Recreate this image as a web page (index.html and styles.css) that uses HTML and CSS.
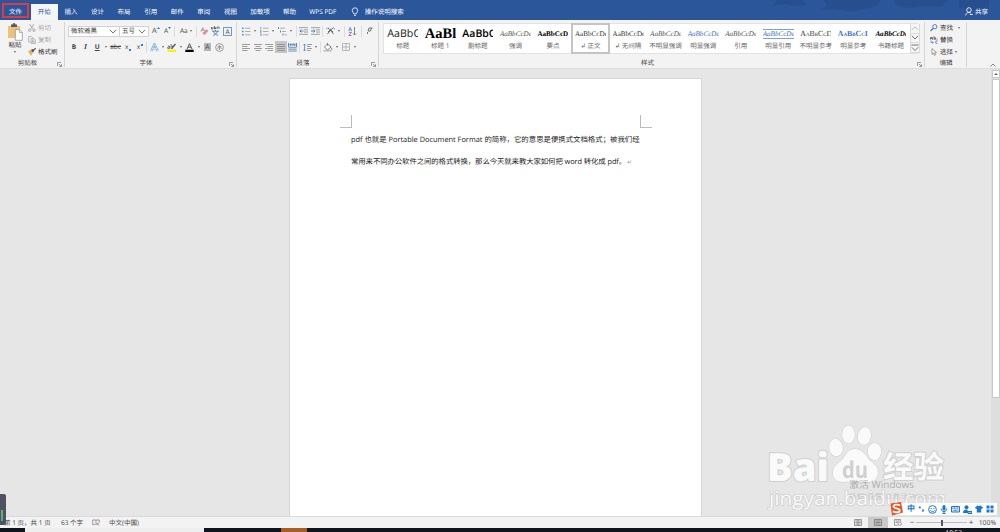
FILE: index.html
```
<!DOCTYPE html>
<html lang="zh-CN">

<head>
  <meta charset="UTF-8">
  <meta name="viewport" content="width=device-width, initial-scale=1.0">
  <title>Word</title>
  <link rel="stylesheet" href="styles.css">
</head>

<body>

  <header class="titlebar">
    <nav class="tabs">
      <span class="tab tab-file">文件</span>
      <span class="tab active">开始</span>
      <span class="tab">插入</span>
      <span class="tab">设计</span>
      <span class="tab">布局</span>
      <span class="tab">引用</span>
      <span class="tab">邮件</span>
      <span class="tab">审阅</span>
      <span class="tab">视图</span>
      <span class="tab tab-addin">加载项</span>
      <span class="tab">帮助</span>
      <span class="tab tab-wps">WPS PDF</span>
    </nav>
    <span class="search">
      <svg width="8" height="10" viewBox="0 0 8 10" fill="none" stroke="#fff" stroke-width=".8"><path d="M2.7 6.8C2.5 5.6 1.3 5 1.3 3.5a2.7 2.7 0 0 1 5.4 0C6.700 5 5.500 5.600 5.300 6.800zM2.900 8.300h2.200"/></svg>
      操作说明搜索
    </span>
    <svg class="clouds" width="220" height="20" viewBox="0 0 220 20" fill="#274f8d"><path d="M8 0h26l4 5-14 1-7-2-14 2zM55 0h57l-5 7-13 2-9 3-20-3-15 1 8-4zM125 0h55l-8 7-18-1-16 2-11-3zM190 0h30v7l-16 3-14-3z"/></svg>
    <span class="share">
      <svg width="8" height="9" viewBox="0 0 8 9" fill="none" stroke="#fff" stroke-width=".8"><circle cx="4" cy="3" r="2.300"/><path d="M.7 8.500c.2-2 1.400-3 3.300-3 1 0 1.700.3 2.200.8M4.800 7.500h3"/></svg>
      共享
    </span>
  </header>

  <section class="ribbon">
    <div class="group g-clip">
      <div class="group-body">
        <div class="paste">
          <svg width="16" height="18" viewBox="0 0 16 18"><path d="M1 3h12v12H1z" fill="#edc27a"/><path d="M4 1.500h1.500a1.500 1.500 0 0 1 3 0H10V4H4z" fill="#5b5b5b"/><path d="M8.300 6.500h4l3 3v7.800h-7z" fill="#fff" stroke="#888" stroke-width=".7"/><path d="M12.300 6.500v3h3" fill="none" stroke="#888" stroke-width=".6"/></svg>
          <span>粘贴</span>
          <i class="caret"></i>
        </div>
        <div class="clip-list">
          <span class="dim"><svg width="8" height="8" viewBox="0 0 8 8" fill="none" stroke="#aaa"><path d="M1.500 0l4 5.500M6 0L2.300 5.500"/><circle cx="1.700" cy="6.300" r="1.200"/><circle cx="6" cy="6.300" r="1.200"/></svg>剪切</span>
          <span class="dim"><svg width="8" height="8" viewBox="0 0 8 8" fill="#eee" stroke="#b5aeb8" stroke-width=".8"><path d="M.5.5h3l1.500 1.500v4H.5zM3 2.500h3L7.500 4v3.500H3zM4 5h2.500M4 6.200h2.500"/></svg>复制</span>
          <span><svg width="8" height="8" viewBox="0 0 8 8"><path d="M0 3l3-1 2 2.500L3 8z" fill="#e8b057"/><path d="M3 2l1.300-1L6 3 5 4.500z" fill="#444"/><path d="M5 2.500L7.700.3" stroke="#444" stroke-width="1.200"/></svg>格式刷</span>
        </div>
      </div>
      <div class="group-title">剪贴板</div>
      <svg class="launcher" viewBox="0 0 5 5"><path d="M.5 4V.5H4M2 2l2.500 2.500M4.500 2.200v2.300H2.200"/></svg>
    </div>

    <div class="group g-font">
      <div class="tool-row">
        <span class="combo combo-face">微软雅黑<svg width="8" height="5" viewBox="0 0 8 5"><path d="M.8.8L4 4 7.200.8"/></svg></span>
        <span class="combo combo-size">五号<svg width="8" height="5" viewBox="0 0 8 5"><path d="M.8.8L4 4 7.200.8"/></svg></span>
        <span class="tool big-a">A<svg class="tip" width="3" height="2" viewBox="0 0 3 2"><path d="M0 2L1.500 0 3 2z"/></svg></span>
        <span class="tool small-a">A<svg class="tip" width="3" height="2" viewBox="0 0 3 2"><path d="M0 0h3L1.500 2z"/></svg></span>
        <i class="sep"></i>
        <span class="tool w19">Aa <i class="caret"></i></span>
        <i class="sep"></i>
        <span class="tool"><svg width="9" height="9" viewBox="0 0 9 9"><path d="M1 4.500L2.700.7 4.500 4M1.600 3.200h2" fill="none" stroke="#777" stroke-width=".7"/><path d="M2.300 6.300l4-4 2.200 1.500-3.800 4.200z" fill="#e08a9b"/></svg></span>
        <span class="tool"><svg width="9" height="10" viewBox="0 0 9 10" fill="none" stroke-width=".8"><path d="M.5 1v2M2 1v2H.5M3.500 0v3h1V1.500h-1M6 3V1h2v2" stroke="#555"/><path d="M1 5.200h7M4.500 4v1M6.500 5.200C6 7.500 4 9 2 9.300M2.500 5.200C3 7.500 5 9 7 9.300" stroke="#2f73b7"/></svg></span>
        <span class="tool"><span class="boxed">A</span></span>
      </div>
      <div class="tool-row row-two">
        <span class="tool"><b>B</b></span>
        <span class="tool it">I</span>
        <span class="tool"><u><b>U</b></u></span>
        <span class="tool w6"><i class="caret"></i></span>
        <span class="tool w12 strike">abc</span>
        <span class="tool script">x<i class="low"></i></span>
        <span class="tool script">x<i class="high"></i></span>
        <i class="sep"></i>
        <span class="tool"><svg width="9" height="9" viewBox="0 0 9 9" fill="none"><path d="M1.200 8L4.400 1.200 7.800 8M2.700 5.500h3.500" stroke="#7fadd9" stroke-width="2.200"/><path d="M1.200 8L4.400 1.200 7.800 8M2.700 5.500h3.500" stroke="#fff" stroke-width=".6"/></svg></span>
        <span class="tool w6"><i class="caret"></i></span>
        <span class="tool"><svg width="10" height="9" viewBox="0 0 10 9"><path d="M1 3h1.500v2.500H.8V4h1.500M4 1v4.500h1.500V3H4" fill="none" stroke="#555" stroke-width=".7"/><path d="M5 5l3.500-4" stroke="#555" stroke-width="1.300"/><path d="M.5 6.700h8.500V9H.5z" fill="#ffef00"/></svg></span>
        <span class="tool w6"><i class="caret"></i></span>
        <span class="tool"><svg width="9" height="9" viewBox="0 0 9 9"><path d="M2 6L4.500.7 7 6M3 4.200h3" fill="none" stroke="#444" stroke-width=".9"/><path d="M.3 6.700h8.400V9H.3z" fill="#000"/></svg></span>
        <span class="tool w6"><i class="caret"></i></span>
        <span class="tool"><span class="shaded">A</span></span>
        <span class="tool"><svg width="9" height="9" viewBox="0 0 9 9" fill="none" stroke="#777" stroke-width=".7"><circle cx="4.500" cy="4.500" r="3.900"/><path d="M2.500 3.700h4M4.500 2v5M3.500 4.300L2.500 6M5.500 4.300L6.500 6"/></svg></span>
      </div>
      <div class="group-title">字体</div>
      <svg class="launcher" viewBox="0 0 5 5"><path d="M.5 4V.5H4M2 2l2.500 2.500M4.500 2.200v2.300H2.200"/></svg>
    </div>

    <div class="group g-para">
      <div class="tool-row">
        <span class="tool w10"><svg width="9" height="9" viewBox="0 0 9 9"><path d="M0 1.200h1.500M0 4.500h1.500M0 7.800h1.500" stroke="#4b87c1" stroke-width="1.400"/><path d="M3 1.200h5.500M3 4.500h5.500M3 7.800h5.500" stroke="#999" stroke-width=".8"/></svg></span>
        <span class="tool w8"><i class="caret"></i></span>
        <span class="tool w10"><svg width="9" height="9" viewBox="0 0 9 9"><path d="M.8 0v2.300M.2 3.500h1v1h-.8v1h1M.2 6.800h1v2H.2" fill="none" stroke="#4b87c1" stroke-width=".7"/><path d="M3 1.200h5.500M3 4.500h5.500M3 7.800h5.500" stroke="#999" stroke-width=".8"/></svg></span>
        <span class="tool w8"><i class="caret"></i></span>
        <span class="tool w10"><svg width="9" height="9" viewBox="0 0 9 9"><path d="M.5 0v2M2.500 3.500v2M5 6.500v2" stroke="#4b87c1"/><path d="M2 1.200h5M4 4.500h4M6.500 7.800H9" stroke="#999" stroke-width=".8"/></svg></span>
        <span class="tool w8"><i class="caret"></i></span>
        <i class="sep"></i>
        <span class="tool"><svg width="9" height="8" viewBox="0 0 9 8"><path d="M0 .7h9M5 2.900h4M5 5h4M0 7.300h9" stroke="#888" stroke-width=".8"/><path d="M4.500 4H1M2.300 2.500L.8 4l1.500 1.500" fill="none" stroke="#2f73b7" stroke-width=".9"/></svg></span>
        <span class="tool"><svg width="9" height="8" viewBox="0 0 9 8"><path d="M0 .7h9M5 2.900h4M5 5h4M0 7.300h9" stroke="#888" stroke-width=".8"/><path d="M0 4h3.500M2.500 2.500L4 4 2.500 5.500" fill="none" stroke="#2f73b7" stroke-width=".9"/></svg></span>
        <i class="sep"></i>
        <span class="tool"><svg width="9" height="8" viewBox="0 0 9 8" fill="none" stroke="#555" stroke-width=".9"><path d="M1.500 7L4.500 3 7.500 7M2 1l5 4M7 1L2 5"/><path d="M0 2.300L1.800.5M9 2.300L7.200.5" stroke="#4b87c1"/></svg></span>
        <span class="tool w6"><i class="caret"></i></span>
        <i class="sep sep-wide"></i>
        <span class="tool"><svg width="9" height="9" viewBox="0 0 9 9" fill="none" stroke-width=".8"><path d="M.7 4L2.200.3 3.700 4M1.200 2.800h2" stroke="#4b87c1"/><path d="M.8 5.300h2.700L.8 8.500h2.700" stroke="#8f57ab"/><path d="M6.500 0v8M5 6.500L6.500 8 8 6.500" stroke="#666"/></svg></span>
        <i class="sep sep-wide"></i>
        <span class="tool"><svg width="7" height="8" viewBox="0 0 7 8"><path d="M5.500 1L4.500 4H2l1-3h3.500M1.500 5v2" fill="none" stroke="#666" stroke-width=".9"/></svg></span>
      </div>
      <div class="tool-row row-two">
        <span class="tool"><svg width="8" height="7" viewBox="0 0 8 7" stroke="#888" stroke-width=".8"><path d="M0 .5h8M0 2.500h5.500M0 4.500h8M0 6.500h5.500"/></svg></span>
        <span class="tool"><svg width="8" height="7" viewBox="0 0 8 7" stroke="#888" stroke-width=".8"><path d="M0 .5h8M1.500 2.500h5M0 4.500h8M1.500 6.500h5"/></svg></span>
        <span class="tool"><svg width="8" height="7" viewBox="0 0 8 7" stroke="#888" stroke-width=".8"><path d="M0 .5h8M2.500 2.500H8M0 4.500h8M2.500 6.500H8"/></svg></span>
        <span class="tool pressed"><svg width="8" height="7" viewBox="0 0 8 7" stroke="#888" stroke-width=".8"><path d="M0 .5h8M0 2.500h8M0 4.500h8M0 6.500h8"/></svg></span>
        <span class="tool"><svg width="9" height="9" viewBox="0 0 9 9"><path d="M0 0h9v9H0z" fill="#c9dcee"/><path d="M.5 0v4M8.500 0v4M2 1.700h5M3 .7l-1 1 1 1M6 .7l1 1-1 1" fill="none" stroke="#3978b3" stroke-width=".8"/><path d="M.5 4.500h8M.5 6.200h8M.5 8h8" stroke="#8a949e" stroke-width=".8"/></svg></span>
        <i class="sep"></i>
        <span class="tool"><svg width="9" height="9" viewBox="0 0 9 9" fill="none"><path d="M1.500 1v7M0 2.500L1.500 1 3 2.500M0 6.500L1.500 8 3 6.500" stroke="#4b87c1" stroke-width=".8"/><path d="M4 1.500h5M4 3.500h3.500M4 5.500h5M4 7.500h3.500" stroke="#888" stroke-width=".8"/></svg></span>
        <span class="tool w6"><i class="caret"></i></span>
        <i class="sep"></i>
        <span class="tool"><svg width="10" height="9" viewBox="0 0 10 9"><path d="M1.500 4l3-3 3.500 3-3.500 3zM4.500 2.500V0" fill="#fff" stroke="#666" stroke-width=".8"/><path d="M8 4.500c1 1 1 2 .5 2.500" fill="none" stroke="#4b87c1"/><path d="M.5 7.800h8" stroke="#aaa" stroke-width="1.200"/></svg></span>
        <span class="tool w6"><i class="caret"></i></span>
        <span class="tool"><svg width="8" height="8" viewBox="0 0 8 8" fill="none" stroke="#aaa" stroke-width=".8"><path d="M.5.5h7v7h-7zM4 .5v7M.5 4h7"/></svg></span>
        <span class="tool w6"><i class="caret"></i></span>
      </div>
      <div class="group-title">段落</div>
      <svg class="launcher" viewBox="0 0 5 5"><path d="M.5 4V.5H4M2 2l2.500 2.500M4.500 2.200v2.300H2.200"/></svg>
    </div>

    <div class="group g-styles">
      <div class="gallery">
        <div class="style"><span class="sample s-head">AaBbC</span><span>标题</span></div>
        <div class="style"><span class="sample s-head1">AaBl</span><span>标题 1</span></div>
        <div class="style"><span class="sample s-sub">AaBbC</span><span>副标题</span></div>
        <div class="style"><span class="sample s-it">AaBbCcDd</span><span>强调</span></div>
        <div class="style"><span class="sample s-bold">AaBbCcD</span><span>要点</span></div>
        <div class="style chosen"><span class="sample">AaBbCcDd</span><span>↲ 正文</span></div>
        <div class="style"><span class="sample">AaBbCcDd</span><span>↲ 无间隔</span></div>
        <div class="style"><span class="sample s-it">AaBbCcDd</span><span>不明显强调</span></div>
        <div class="style"><span class="sample s-it s-blue">AaBbCcDd</span><span>明显强调</span></div>
        <div class="style"><span class="sample s-it">AaBbCcDd</span><span>引用</span></div>
        <div class="style"><span class="sample s-it s-blue s-lined">AaBbCcDd</span><span>明显引用</span></div>
        <div class="style"><span class="sample s-caps">AaBbCcD</span><span>不明显参考</span></div>
        <div class="style"><span class="sample s-caps s-bold s-blue">AaBbCcI</span><span>明显参考</span></div>
        <div class="style"><span class="sample s-it s-bold">AaBbCcDd</span><span>书籍标题</span></div>
        <div class="gallery-nav">
          <span class="off"><svg width="8" height="5" viewBox="0 0 8 5"><path d="M.8 4L4 .8 7.200 4"/></svg></span>
          <span><svg width="8" height="5" viewBox="0 0 8 5"><path d="M.8.8L4 4 7.200.8"/></svg></span>
          <span><svg width="8" height="8" viewBox="0 0 8 8"><path d="M.3 1h7.400M.8 3.300L4 6.500l3.200-3.200"/></svg></span>
        </div>
      </div>
      <div class="group-title">样式</div>
      <svg class="launcher" viewBox="0 0 5 5"><path d="M.5 4V.5H4M2 2l2.500 2.500M4.500 2.200v2.300H2.200"/></svg>
    </div>

    <div class="group g-edit">
      <div class="edit-list">
        <span><svg width="8" height="8" viewBox="0 0 8 8" fill="none" stroke="#4a7fb8"><circle cx="4.800" cy="2.700" r="2.100"/><path d="M3.300 4.300L.5 7" stroke-width="1.300"/></svg>查找 <i class="caret"></i></span>
        <span><svg width="8" height="8" viewBox="0 0 8 8" fill="none" stroke-width=".8"><path d="M.5 3.500v-2h2v2M.5 2.700h2M4 .3v3h1.500V1.800H4" stroke="#555"/><path d="M1 4.500v2h2M7.500 5H5.800v2.300h1.700M2.500 5.500l1 1-1 1" stroke="#4b87c1"/><path d="M6.500 2.500c1 .5 1 1 .5 2" stroke="#9b5ab5"/></svg>替换</span>
        <span><svg width="8" height="8" viewBox="0 0 8 8" fill="#fff" stroke="#777" stroke-width=".7"><path d="M2 .6v5.800l1.500-1.300 1 2.300 1-.5-1-2.200h2z"/></svg>选择<i class="caret near"></i></span>
      </div>
      <div class="group-title">编辑</div>
    </div>
    <svg class="collapse" width="6" height="4" viewBox="0 0 6 4"><path d="M.5 3.500L3 1l2.500 2.500" fill="none" stroke="#666" stroke-width=".8"/></svg>
  </section>

  <main class="workspace">
    <article class="page">
      <div class="crop-marks"><i class="mark mark-left"></i><i class="mark mark-right"></i></div>
      <div class="doc-text">
        <p>pdf 也就是 Portable Document Format 的简称，它的意思是便携式文档格式；被我们经</p>
        <p class="last">常用来不同办公软件之间的格式转换，那么今天就来教大家如何把 word 转化成 pdf。<small>↵</small></p>
      </div>
    </article>
    <div class="scrollbar">
      <span class="scroll-up"></span>
      <span class="thumb"></span>
    </div>
  </main>

  <footer class="statusbar">
    <span class="st-page">第 1 页，共 1 页</span>
    <span class="st-words">63 个字</span>
    <svg class="st-book" width="8" height="7" viewBox="0 0 8 7" fill="none" stroke="#777" stroke-width=".7"><path d="M4 1v5M4 1H.7v4.500H3M4 1h3.300v2M4.500 6l3-3M5 4l2 2.500"/></svg>
    <span>中文(中国)</span>
    <div class="views">
      <span class="view"><svg width="8" height="7" viewBox="0 0 8 7" fill="none" stroke="#777" stroke-width=".7"><path d="M.5.5H4v6H.5zM4 .5h3.500v6H4zM1.300 2h1.800M1.300 3.500h1.800M1.300 5h1.800M5 2h1.800M5 3.500h1.800M5 5h1.800"/></svg></span>
      <span class="view on"><svg width="8" height="7" viewBox="0 0 8 7" fill="none" stroke="#777" stroke-width=".8"><path d="M.5.5h7v6h-7zM1.500 2h5M1.500 3.500h5M1.500 5h5"/></svg></span>
      <span class="view"><svg width="8" height="7" viewBox="0 0 8 7" fill="none" stroke="#777" stroke-width=".7"><path d="M3.500 6.300h-3V.5h6v2M1.500 2h4M1.500 3.500h2.300"/><circle cx="5.700" cy="4.700" r="1.700"/></svg></span>
      <span class="zoom-sign">−</span>
      <span class="slider"><i></i></span>
      <span class="zoom-sign">+</span>
      <span class="zoom-value">100%</span>
    </div>
  </footer>

  <div class="taskbar">
    <i class="task-light"></i>
    <i class="task-orange"></i>
    <span class="clock">10:53</span>
  </div>

  <!-- things floating over the window -->
  <div class="file-frame"></div>
  <div class="dock-widget"><i></i></div>

  <svg class="watermark" width="190" height="90" viewBox="0 0 190 90">
    <ellipse cx="76" cy="27.500" rx="6.800" ry="8.800" transform="rotate(-8 76 27.500)"/>
    <ellipse cx="88.500" cy="14.500" rx="6.300" ry="9"/>
    <ellipse cx="104.500" cy="16" rx="6.500" ry="9" transform="rotate(10 104.500 16)"/>
    <ellipse cx="114.500" cy="31.500" rx="6.700" ry="8.600" transform="rotate(4 114.500 31.500)"/>
    <path d="M95 29c6 0 9 4 12 8 4 6 11 8 11 15 0 7-5 10-11 10-5 0-8-1-12-1s-8 1-12 1c-7 0-10.500-4-10-10 .5-7 7-9 10.500-14 3-5 5.500-9 11.500-9z"/>
    <text x="7" y="61" class="wm-bai" textLength="62" lengthAdjust="spacingAndGlyphs">Bai</text>
    <text x="82" y="58" class="wm-du" textLength="26" lengthAdjust="spacingAndGlyphs">du</text>
    <text x="123" y="58" class="wm-cn" textLength="61" lengthAdjust="spacingAndGlyphs">经验</text>
    <text x="9" y="85" class="wm-url" textLength="177" lengthAdjust="spacingAndGlyphs">jingyan.baidu.com</text>
  </svg>

  <div class="activate">
    <div class="activate-big">激活 Windows</div>
    <div class="activate-small">转到"设置"以激活 Windows。</div>
  </div>

  <div class="ime">
    <svg class="sogou" width="15" height="14" viewBox="0 0 15 14"><path d="M1.500 1.500L12 0l2 10.500-11 3z" fill="#f0501e"/><path d="M11 3.500C9 2.200 4.500 2.300 4.500 4.600c0 2.300 6.300 1.400 6.300 3.800 0 2.200-4.500 2.400-7 1" fill="none" stroke="#fff" stroke-width="1.800"/></svg>
    <b>中</b>
    <svg width="7" height="8" viewBox="0 0 7 8" fill="#1b77ce"><circle cx="1.800" cy="2.500" r="1.100"/><path d="M4 4.500h2c0 1.500-.5 2.300-1.500 2.700z"/></svg>
    <svg width="9" height="9" viewBox="0 0 9 9" fill="none" stroke="#1b77ce"><circle cx="4.500" cy="4.500" r="3.900"/><path d="M2.700 3.500h1M5.500 3.500h1M2.500 5.300c1 1.800 3 1.800 4 0"/></svg>
    <svg width="8" height="9" viewBox="0 0 8 9" fill="none" stroke="#1b77ce"><path d="M4 1.500V4" stroke-width="3" stroke-linecap="round"/><path d="M1.200 3.500c0 4 5.600 4 5.600 0M4 6.500v2M2.500 8.500h3"/></svg>
    <svg width="9" height="8" viewBox="0 0 9 8"><path d="M.5 1.500h8v5.500h-8z" fill="#d5e7f7" stroke="#1b77ce"/><path d="M1.500 3.200h6M2.500 5.300h4" stroke="#1b77ce" stroke-dasharray="1 .5"/></svg>
    <svg width="9" height="9" viewBox="0 0 9 9" fill="#1b77ce"><circle cx="3.500" cy="2.300" r="2"/><path d="M0 8c0-3 2-3.800 4-3.500L5 6h4v3H5L4.500 8z"/><path d="M5.500 7.500h2.700" stroke="#fff" stroke-width=".6"/></svg>
    <svg width="8" height="8" viewBox="0 0 8 8" fill="#1b77ce"><path d="M2.500.5h.7c.3 1 1.300 1 1.600 0h.7L8 2.500 7 4 6.200 3.500v4H1.800v-4L1 4 0 2.500z"/></svg>
    <svg width="8" height="8" viewBox="0 0 8 8" fill="#1b77ce"><path d="M.5.5h3v3h-3zM4.500.5h3v3h-3zM.5 4.500h3v3h-3zM4.500 4.500h3v3h-3z"/></svg>
  </div>

</body>

</html>
```
FILE: styles.css
```
* {
  box-sizing: border-box;
}

body {
  margin: 0;
  width: 1000px;
  height: 532px;
  overflow: hidden;
  position: relative;
  display: flex;
  flex-direction: column;
  background: #e6e6e6;
  color: #444;
  font-family: "Open Sans", "Noto Sans CJK SC", sans-serif;
  font-size: 6.5px;
  line-height: 8px;
  text-rendering: geometricPrecision;
}

svg {
  flex: none;
}

i {
  font-style: normal;
}

/* title bar */
.titlebar {
  height: 20px;
  flex: none;
  display: flex;
  background: #2b579a;
  color: #fff;
}

.tabs {
  display: flex;
  padding-top: 4px;
}

.tab {
  width: 26.6px;
  height: 16px;
  line-height: 15px;
  text-align: center;
  white-space: nowrap;
}

.tab-file {
  width: 31px;
}

.tab.active {
  background: #f5f6f7;
  color: #2b579a;
}

.tab-addin {
  width: 32.5px;
}

.tab-wps {
  width: 40px;
}

.search {
  display: flex;
  align-items: center;
  gap: 6px;
  margin-left: 8px;
  padding-top: 3px;
}

.clouds {
  margin-left: auto;
}

.share {
  display: flex;
  align-items: center;
  gap: 2px;
  padding: 3px 12px 0 0;
  margin-left: -24px;
}

/* ribbon */
.ribbon {
  height: 49px;
  flex: none;
  display: flex;
  position: relative;
  background: #f3f3f3;
  border-bottom: 1px solid #dcdcdc;
}

.group {
  position: relative;
  display: flex;
  flex-direction: column;
  padding-top: 3px;
}

.group::after {
  content: "";
  position: absolute;
  right: 0;
  top: 2px;
  width: 1px;
  height: 45px;
  background: #d5d5d5;
}

.group-title {
  margin-top: auto;
  height: 9px;
  line-height: 8px;
  text-align: center;
}

.launcher {
  position: absolute;
  right: 3px;
  bottom: 1px;
  width: 5px;
  height: 5px;
  fill: none;
  stroke: #777;
  stroke-width: .7;
}

.g-clip {
  width: 65px;
}

.g-clip .group-title {
  padding-right: 10px;
}

.g-font {
  width: 172px;
}

.g-font .group-title {
  padding-right: 10px;
}

.g-para {
  width: 142px;
}

.g-para .group-title {
  padding-right: 10px;
}

.g-styles {
  width: 546px;
}

.g-styles .group-title {
  padding-right: 9px;
}

.g-edit {
  width: 42px;
}

.caret {
  display: inline-block;
  border: 1.5px solid transparent;
  border-top: 2px solid #666;
  border-bottom: 0;
  vertical-align: middle;
}

.group-body {
  display: flex;
}

.paste {
  width: 28px;
  padding-left: 2px;
  display: flex;
  flex-direction: column;
  align-items: center;
  color: #333;
}

.paste .caret {
  margin-top: 2px;
}

.clip-list,
.edit-list {
  display: flex;
  flex-direction: column;
}

.clip-list span,
.edit-list span {
  height: 12px;
  padding-bottom: 3px;
  display: flex;
  align-items: center;
  gap: 2px;
  color: #333;
}

.clip-list .dim {
  color: #aaa;
}

.edit-list {
  padding-left: 5px;
}

.edit-list .caret {
  margin-left: 3px;
}

.edit-list .near {
  margin-left: 0;
}

.tool-row {
  height: 16px;
  display: flex;
  align-items: center;
  padding-left: 3px;
}

.g-para .tool-row {
  padding-left: 4px;
}

.g-para .row-two {
  padding-left: 3px;
}

.combo {
  height: 11px;
  padding: 0 2px;
  display: flex;
  align-items: center;
  justify-content: space-between;
  background: #fff;
  border: 1px solid #d2d2d2;
}

.combo svg,
.gallery-nav svg {
  fill: none;
  stroke: #666;
  stroke-width: .9;
}

.combo-face {
  width: 52px;
}

.combo-size {
  width: 29px;
  border-left: 0;
}

.tool {
  width: 11.7px;
  height: 12px;
  flex: none;
  display: flex;
  align-items: center;
  justify-content: center;
  white-space: nowrap;
}

.tip {
  align-self: flex-start;
  margin-top: 2px;
  fill: #3978b3;
}

.script {
  gap: 1px;
}

.low,
.high {
  width: 1.5px;
  height: 2px;
  background: #3978b3;
}

.low {
  margin-top: 5px;
}

.high {
  margin-bottom: 4px;
}

.big-a {
  font-size: 7.5px;
}

.small-a {
  font-size: 6.5px;
}

.tool.w6 {
  width: 6px;
}

.tool.w8 {
  width: 8px;
}

.tool.w10 {
  width: 10px;
}

.tool.w12 {
  width: 13px;
}

.tool.w19 {
  width: 19px;
  gap: 2px;
}

.sep {
  width: 1px;
  height: 11px;
  margin: 0 1px;
  background: #dcdcdc;
}

.sep-wide {
  margin: 0 2px;
}

.it {
  font-family: "Liberation Serif", serif;
  font-style: italic;
  font-weight: bold;
  font-size: 7.5px;
}

.strike {
  text-decoration: line-through;
}

.boxed {
  width: 9px;
  height: 9px;
  line-height: 8px;
  text-align: center;
  border: 1px solid #6a9dcc;
}

.shaded {
  width: 7px;
  height: 8px;
  text-align: center;
  background: #b5b5b5;
}

.pressed {
  background: #c6c6c6;
}

.g-font .big-a {
  margin-left: 1px;
}

/* style gallery */
.gallery {
  width: 536px;
  height: 31px;
  margin-left: 4px;
  display: flex;
  background: #fff;
  border: 1px solid #e3e3e3;
}

.style {
  width: 37.55px;
  flex: none;
  display: flex;
  flex-direction: column;
  align-items: center;
  white-space: nowrap;
  color: #666;
}

.sample {
  width: 31px;
  height: 13px;
  margin: 3px 0 2px;
  line-height: 14px;
  overflow: hidden;
  color: #333;
  font-family: "Liberation Serif", serif;
  font-size: 7.1px;
}

.s-head,
.s-sub {
  font-family: "Open Sans", sans-serif;
  font-size: 10.7px;
  color: #222;
}

.s-sub {
  font-size: 10.5px;
  font-weight: 600;
  color: #000;
}

.s-head1 {
  font-size: 14.5px;
  font-weight: bold;
  color: #000;
}

.s-it {
  font-style: italic;
  color: #555;
}

.s-bold {
  font-weight: bold;
  color: #000;
}

.s-blue {
  color: #4472c4;
}

.s-caps {
  font-variant: small-caps;
  font-size: 7.8px;
}

.s-lined {
  height: 10px;
  margin: 5px 0 3px;
  line-height: 8px;
  border-top: 1px solid #7d9fd8;
  border-bottom: 1px solid #7d9fd8;
}

.chosen {
  outline: 2px solid #c4c4c4;
  outline-offset: -1px;
}

.gallery-nav {
  width: 9px;
  display: grid;
  grid-template-rows: 1fr 1fr 1fr;
  background: #f5f5f5;
}

.gallery-nav span {
  display: flex;
  align-items: center;
  justify-content: center;
  border: 1px solid #dadada;
  border-top: 0;
}

.gallery-nav .off svg {
  stroke: #bbb;
}

.collapse {
  position: absolute;
  right: 4px;
  bottom: 1px;
}

/* document */
.workspace {
  height: 447px;
  flex: none;
  display: flex;
  justify-content: flex-end;
  overflow: hidden;
}

.page {
  width: 413px;
  height: 438px;
  margin: 9px 289px 0 0;
  padding: 36px 49px 0 50px;
  flex: none;
  background: #fff;
  border: 1px solid #d6d6d6;
  border-bottom: 0;
}

.crop-marks {
  display: flex;
  justify-content: space-between;
}

.mark {
  width: 12px;
  height: 13px;
  border-bottom: 1px solid #bbb;
}

.mark-left {
  border-right: 1px solid #bbb;
}

.mark-right {
  border-left: 1px solid #bbb;
}

.doc-text {
  padding: 1px 0 0 11px;
  color: #222;
  font-size: 7.4px;
}

.doc-text p {
  margin: 0;
  height: 22px;
  line-height: 22px;
  white-space: nowrap;
}

.doc-text .last {
  letter-spacing: -.09px;
}

.doc-text small {
  margin-left: 1px;
  font-size: 6px;
  color: #999;
}

.scrollbar {
  width: 9px;
  display: flex;
  flex-direction: column;
  gap: 1px;
  padding: 1px 0 0 1px;
  background: #dedede;
}

.scroll-up {
  height: 8px;
  display: flex;
  align-items: center;
  justify-content: center;
  background: #fff;
  border: 1px solid #c8c8c8;
}

.scroll-up::before {
  content: "";
  border: 2px solid transparent;
  border-bottom-color: #666;
  border-top: 0;
}

.thumb {
  height: 319px;
  background: #fff;
  border: 1px solid #c8c8c8;
}

/* status bar */
.statusbar {
  height: 12px;
  flex: none;
  display: flex;
  align-items: center;
  padding-left: 4px;
  background: #f3f3f3;
  border-top: 1px solid #dadada;
}

.st-page {
  width: 57px;
}

.st-words {
  width: 31px;
}

.st-book {
  margin-right: 9px;
}

.views {
  height: 11px;
  margin-left: auto;
  padding-right: 4px;
  display: flex;
  align-items: center;
}

.view {
  width: 20px;
  height: 11px;
  display: flex;
  align-items: center;
  justify-content: center;
}

.view.on {
  background: #c9c9c9;
}

.zoom-sign {
  width: 8px;
  text-align: center;
  font-size: 8px;
}

.slider {
  width: 51px;
  height: 1px;
  display: flex;
  align-items: center;
  justify-content: center;
  background: #bbb;
}

.slider i {
  width: 2px;
  height: 6px;
  background: #555;
}

.zoom-value {
  width: 21px;
  text-align: right;
  font-size: 6.8px;
}

.taskbar {
  height: 4px;
  flex: none;
  display: flex;
  overflow: hidden;
  padding-left: 25px;
  background: #10141c;
}

.task-light {
  width: 179px;
  background: #eee;
}

.task-orange {
  width: 26px;
  margin-left: 77px;
  background: #a65f27;
}

.clock {
  margin: 1px 38px 0 auto;
  color: #fff;
}

/* overlays */
.file-frame {
  position: absolute;
  left: 2px;
  top: 3px;
  width: 27px;
  height: 15px;
  border: 2px solid #dc3a48;
}

.dock-widget {
  position: absolute;
  left: 0;
  top: 494px;
  width: 6px;
  height: 31px;
  padding: 16px 0 0 1px;
  background: #4f5261;
  border-radius: 0 2px 2px 0;
}

.dock-widget i {
  display: block;
  width: 2px;
  height: 11px;
  background: linear-gradient(#75b35c, #4ca6a6);
}

.activate {
  position: absolute;
  left: 849px;
  top: 478px;
  color: rgba(130, 130, 130, .6);
  white-space: nowrap;
}

.activate-big {
  font-size: 10px;
  line-height: 13px;
}

.activate-small {
  font-size: 7.5px;
  line-height: 12px;
  color: rgba(150, 150, 150, .35);
}

.watermark {
  position: absolute;
  left: 760px;
  top: 420px;
  fill: #fafafa;
  stroke: #cfcfcf;
  stroke-width: 1;
  paint-order: stroke;
}

.wm-bai {
  font: 800 39px "Open Sans", sans-serif;
  stroke-width: 2px;
}

.wm-du {
  font: bold 23px "Open Sans", sans-serif;
  fill: #d0d0d0;
  stroke: none;
}

.wm-cn {
  font: bold 31px "Noto Sans CJK SC", sans-serif;
  stroke-width: 2px;
}

.wm-url {
  font: 19px "Open Sans", sans-serif;
  stroke-width: 1.5px;
}

.ime {
  position: absolute;
  left: 889px;
  top: 502px;
  width: 108px;
  height: 14px;
  display: flex;
  align-items: center;
  justify-content: space-between;
  padding-right: 3px;
  background: linear-gradient(#fff, #fff) 8px 1px / 100px 12px no-repeat;
}

.ime b {
  color: #1b77ce;
  font-size: 8px;
}
```
